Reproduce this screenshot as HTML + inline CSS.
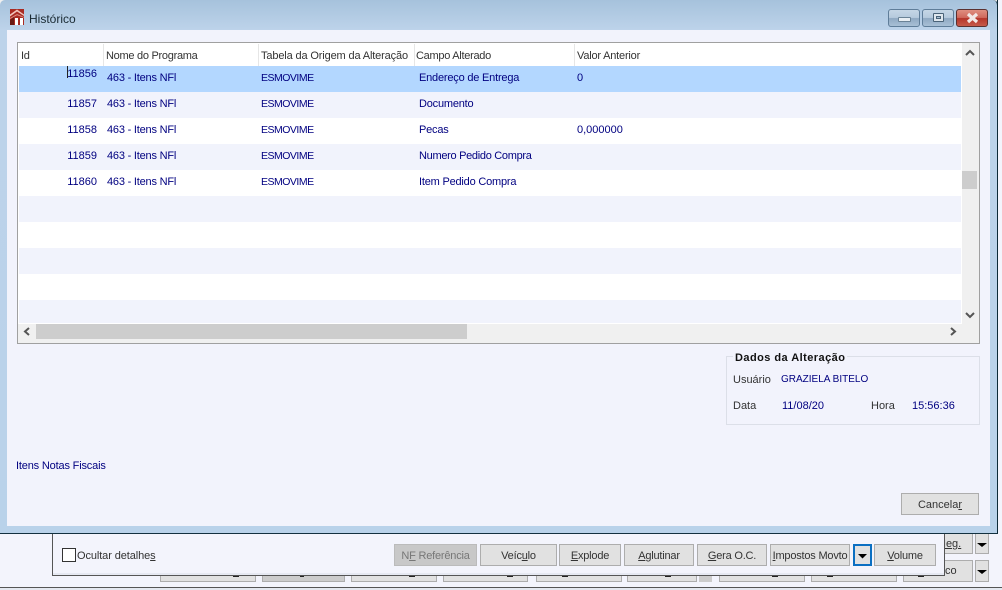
<!DOCTYPE html>
<html><head><meta charset="utf-8"><style>
html,body{margin:0;padding:0}
body{width:1002px;height:590px;position:relative;overflow:hidden;background:#f0f0f0;font:11px/14px "Liberation Sans",sans-serif;color:#222}
div{position:absolute;box-sizing:border-box}
.t{white-space:nowrap;height:14px}
.b{color:#000080;letter-spacing:-.2px}
.n{letter-spacing:0}
.e{font-size:10.5px;letter-spacing:-.5px}
.h{top:49px;color:#333;letter-spacing:-.28px}
.sep{top:44px;width:1px;height:22px;background:#e6e6e6}
.row{left:19px;width:942px;height:26px}
.btn{background:#e1e1e1;border:1px solid #adadad;text-align:center;color:#333;white-space:nowrap;line-height:22px;top:544px;height:22px;letter-spacing:-.2px}
.back{background:#e1e1e1;border:1px solid #adadad}
.d{background:#222;height:2px;width:6px;top:575px}
u{text-underline-offset:1px}
</style></head><body>
<!-- background app -->
<div style="left:0;top:534px;width:1002px;height:54px;background:#f3f4fc"></div>
<div style="left:0;top:587px;width:1002px;height:1px;background:#555"></div>
<div style="left:0;top:588px;width:1002px;height:2px;background:#e4e8f0"></div>
<div class="back" style="left:160px;top:560px;width:96px;height:22px"></div>
<div class="back" style="left:262px;top:560px;width:83px;height:22px;background:#ccc"></div>
<div class="back" style="left:351px;top:560px;width:86px;height:22px"></div>
<div class="back" style="left:443px;top:560px;width:85px;height:22px"></div>
<div class="back" style="left:536px;top:560px;width:86px;height:22px"></div>
<div class="back" style="left:627px;top:560px;width:70px;height:22px"></div>
<div style="left:699px;top:575px;width:13px;height:7px;background:#ccc"></div>
<div class="back" style="left:719px;top:560px;width:86px;height:22px"></div>
<div class="back" style="left:811px;top:560px;width:86px;height:22px"></div>
<div class="back" style="left:903px;top:560px;width:70px;height:22px"></div>
<div class="back" style="left:975px;top:560px;width:14px;height:22px"></div>
<div class="back" style="left:903px;top:533px;width:70px;height:21px"></div>
<div class="back" style="left:975px;top:533px;width:14px;height:21px"></div>
<div class="d" style="left:233px"></div><div class="d" style="left:300px;width:4px"></div><div class="d" style="left:409px"></div>
<div class="d" style="left:507px"></div><div class="d" style="left:562px"></div><div class="d" style="left:665px"></div>
<div class="d" style="left:772px"></div><div class="d" style="left:827px"></div><div class="d" style="left:918px"></div>
<div class="t" style="left:938px;top:537px;color:#333"><u>Neg.</u></div>
<div class="t" style="left:945px;top:564px;color:#333">co</div>
<svg style="position:absolute;left:975px;top:533px" width="14" height="50"><path d="M2 10h10l-5 4zM2 37h10l-5 4z" fill="#000"/></svg>

<!-- lower panel -->
<div style="left:52px;top:530px;width:893px;height:46px;background:#f3f4fc;border:1px solid #555;border-top:0"></div>
<div style="left:53px;top:573px;width:891px;height:2px;background:#e6e9f2"></div>
<div style="left:62px;top:548px;width:14px;height:14px;background:#fff;border:1px solid #333"></div>
<div class="t" style="left:77px;top:549px;color:#333;letter-spacing:-.1px">Ocultar detalhe<u>s</u></div>
<div class="btn" style="left:394px;width:83px;background:#c8c8c8;border-color:#bbb;color:#777">N<u>F</u> Referência</div>
<div class="btn" style="left:480px;width:77px">Veíc<u>u</u>lo</div>
<div class="btn" style="left:559px;width:62px"><u>E</u>xplode</div>
<div class="btn" style="left:624px;width:70px"><u>A</u>glutinar</div>
<div class="btn" style="left:697px;width:70px"><u>G</u>era O.C.</div>
<div class="btn" style="left:770px;width:80px"><u>I</u>mpostos Movto</div>
<div class="btn" style="left:853px;width:19px;border:2px solid #0a6fc2"></div>
<svg style="position:absolute;left:853px;top:544px" width="19" height="22"><path d="M5 10h9l-4.500 4.500z" fill="#000"/></svg>
<div class="btn" style="left:874px;width:62px"><u>V</u>olume</div>

<!-- window frame -->
<div style="left:0;top:0;width:998px;height:534px;background:linear-gradient(#a6c2dc 0,#bdd3ea 30px,#b9d2ea 100%);border-right:1px solid #12303f;border-bottom:1px solid #12303f;border-radius:5px 5px 0 0"></div>
<div style="left:997px;top:0;width:1px;height:533px;background:#0d2a38"></div>
<div style="left:998px;top:0;width:4px;height:534px;background:#f3f4fc"></div>
<!-- client -->
<div style="left:7px;top:30px;width:983px;height:496px;background:#f2f3fc"></div>

<!-- icon -->
<svg style="position:absolute;left:10px;top:9px" width="15" height="17">
<rect x="0" y="0" width="14" height="16" fill="#a82a22"/>
<path d="M0 5.500 7 .5l7 5v1.500L7 2.500 0 7.500z" fill="#f0c4bc"/>
<path d="M0 9 7 5l7 3v.800L7 6.200 0 10z" fill="#d98a80"/>
<path d="M0 16v-5l4-3v8z" fill="#6a1a14"/>
<rect x="5" y="9" width="3" height="7" fill="#fff"/>
<rect x="10" y="9" width="3" height="7" fill="#fff"/>
</svg>
<div class="t" style="left:29px;top:12px;font-size:12px;color:#1a2a33">Histórico</div>

<!-- window buttons -->
<div style="left:888px;top:9px;width:32px;height:18px;border:1px solid #5f7d99;border-radius:3px;background:linear-gradient(#c5d6e6 0,#b6cadd 48%,#8fa9c2 52%,#a8c0d6 100%)"></div>
<div style="left:898px;top:17px;width:13px;height:5px;background:#e8eef3;border:1px solid #6a8296;border-radius:1px"></div>
<div style="left:922px;top:9px;width:32px;height:18px;border:1px solid #5f7d99;border-radius:3px;background:linear-gradient(#c5d6e6 0,#b6cadd 48%,#8fa9c2 52%,#a8c0d6 100%)"></div>
<div style="left:933px;top:13px;width:11px;height:9px;background:#dfe7ee;border:1px solid #4a6378;border-radius:1px"></div>
<div style="left:936px;top:16px;width:5px;height:3px;background:#a9bfd3;border:1px solid #4a6378"></div>
<div style="left:956px;top:9px;width:32px;height:18px;border:1px solid #5a3030;border-radius:3px;background:linear-gradient(#df8f80 0,#d0685c 48%,#b5352a 52%,#c65a4a 100%)"></div>
<svg style="position:absolute;left:965px;top:12px" width="15" height="12"><path d="M3 2l9 8M12 2l-9 8" stroke="#f2e8e6" stroke-width="3.200"/></svg>

<!-- grid -->
<div style="left:17px;top:42px;width:963px;height:302px;background:#f0f0f0;border:1px solid #a0a0a0;border-right-width:1px"></div>
<div style="left:18px;top:43px;width:944px;height:23px;background:#fff"></div>
<div style="left:18px;top:66px;width:1px;height:257px;background:#fff"></div>
<div class="row" style="top:66px;background:#b3d7ff"></div>
<div class="row" style="top:92px;background:#f1f3fc"></div>
<div class="row" style="top:118px;background:#fff"></div>
<div class="row" style="top:144px;background:#f1f3fc"></div>
<div class="row" style="top:170px;background:#fff"></div>
<div class="row" style="top:196px;background:#f1f3fc"></div>
<div class="row" style="top:222px;background:#fff"></div>
<div class="row" style="top:248px;background:#f1f3fc"></div>
<div class="row" style="top:274px;background:#fff"></div>
<div class="row" style="top:300px;height:23px;background:#f1f3fc"></div>
<div style="left:961px;top:43px;width:1px;height:280px;background:#fff"></div>
<div style="left:18px;top:323px;width:944px;height:1px;background:#fff"></div>
<div class="sep" style="left:103px"></div><div class="sep" style="left:258px"></div><div class="sep" style="left:414px"></div><div class="sep" style="left:574px"></div>
<div class="t h" style="left:21px">Id</div>
<div class="t h" style="left:106px">Nome do Programa</div>
<div class="t h" style="left:261px;letter-spacing:-.14px">Tabela da Origem da Alteração</div>
<div class="t h" style="left:416px">Campo Alterado</div>
<div class="t h" style="left:577px;letter-spacing:-.2px">Valor Anterior</div>

<div style="left:67px;top:66px;width:1px;height:12px;background:#222"></div>
<div class="t b n" style="right:905px;top:67px">11856</div>
<div class="t b n" style="right:905px;top:97px">11857</div>
<div class="t b n" style="right:905px;top:123px">11858</div>
<div class="t b n" style="right:905px;top:149px">11859</div>
<div class="t b n" style="right:905px;top:175px">11860</div>

<div class="t b" style="left:107px;top:71px">463 - Itens NFl</div>
<div class="t b" style="left:107px;top:97px">463 - Itens NFl</div>
<div class="t b" style="left:107px;top:123px">463 - Itens NFl</div>
<div class="t b" style="left:107px;top:149px">463 - Itens NFl</div>
<div class="t b" style="left:107px;top:175px">463 - Itens NFl</div>

<div class="t b e" style="left:261px;top:71px">ESMOVIME</div>
<div class="t b e" style="left:261px;top:97px">ESMOVIME</div>
<div class="t b e" style="left:261px;top:123px">ESMOVIME</div>
<div class="t b e" style="left:261px;top:149px">ESMOVIME</div>
<div class="t b e" style="left:261px;top:175px">ESMOVIME</div>

<div class="t b" style="left:419px;top:71px">Endereço de Entrega</div>
<div class="t b" style="left:419px;top:97px">Documento</div>
<div class="t b" style="left:419px;top:123px">Pecas</div>
<div class="t b" style="left:419px;top:149px;letter-spacing:-.3px">Numero Pedido Compra</div>
<div class="t b" style="left:419px;top:175px">Item Pedido Compra</div>

<div class="t b n" style="left:577px;top:71px">0</div>
<div class="t b n" style="left:577px;top:123px">0,000000</div>

<!-- scrollbars -->
<div style="left:962px;top:171px;width:15px;height:18px;background:#cdcdcd"></div>
<div style="left:36px;top:324px;width:431px;height:15px;background:#cdcdcd"></div>
<svg style="position:absolute;left:0;top:0" width="1002" height="350" fill="none" stroke="#555" stroke-width="2">
<path d="M966 55l4-4 4 4"/>
<path d="M966 313l4 4 4-4"/>
<path d="M29 328l-4 3.500 4 3.500"/>
<path d="M951 328l4 3.500-4 3.500"/>
</svg>

<!-- group -->
<div style="left:726px;top:356px;width:254px;height:69px;border:1px solid #dcdfe8"></div>
<div class="t" style="left:733px;top:351px;padding:0 2px;background:#f2f3fc;font-weight:bold;color:#111;letter-spacing:.45px">Dados da Alteração</div>
<div class="t" style="left:733px;top:373px;color:#333">Usuário</div>
<div class="t b" style="left:781px;top:373px;font-size:10px;letter-spacing:0">GRAZIELA BITELO</div>
<div class="t" style="left:733px;top:399px;color:#333">Data</div>
<div class="t b n" style="left:782px;top:399px">11/08/20</div>
<div class="t" style="left:871px;top:399px;color:#333">Hora</div>
<div class="t b n" style="left:912px;top:399px">15:56:36</div>

<div class="t b" style="left:16px;top:459px;letter-spacing:-.17px">Itens Notas Fiscais</div>

<div class="btn" style="left:901px;top:493px;width:78px;height:22px;letter-spacing:0">Cancela<u>r</u></div>
</body></html>
